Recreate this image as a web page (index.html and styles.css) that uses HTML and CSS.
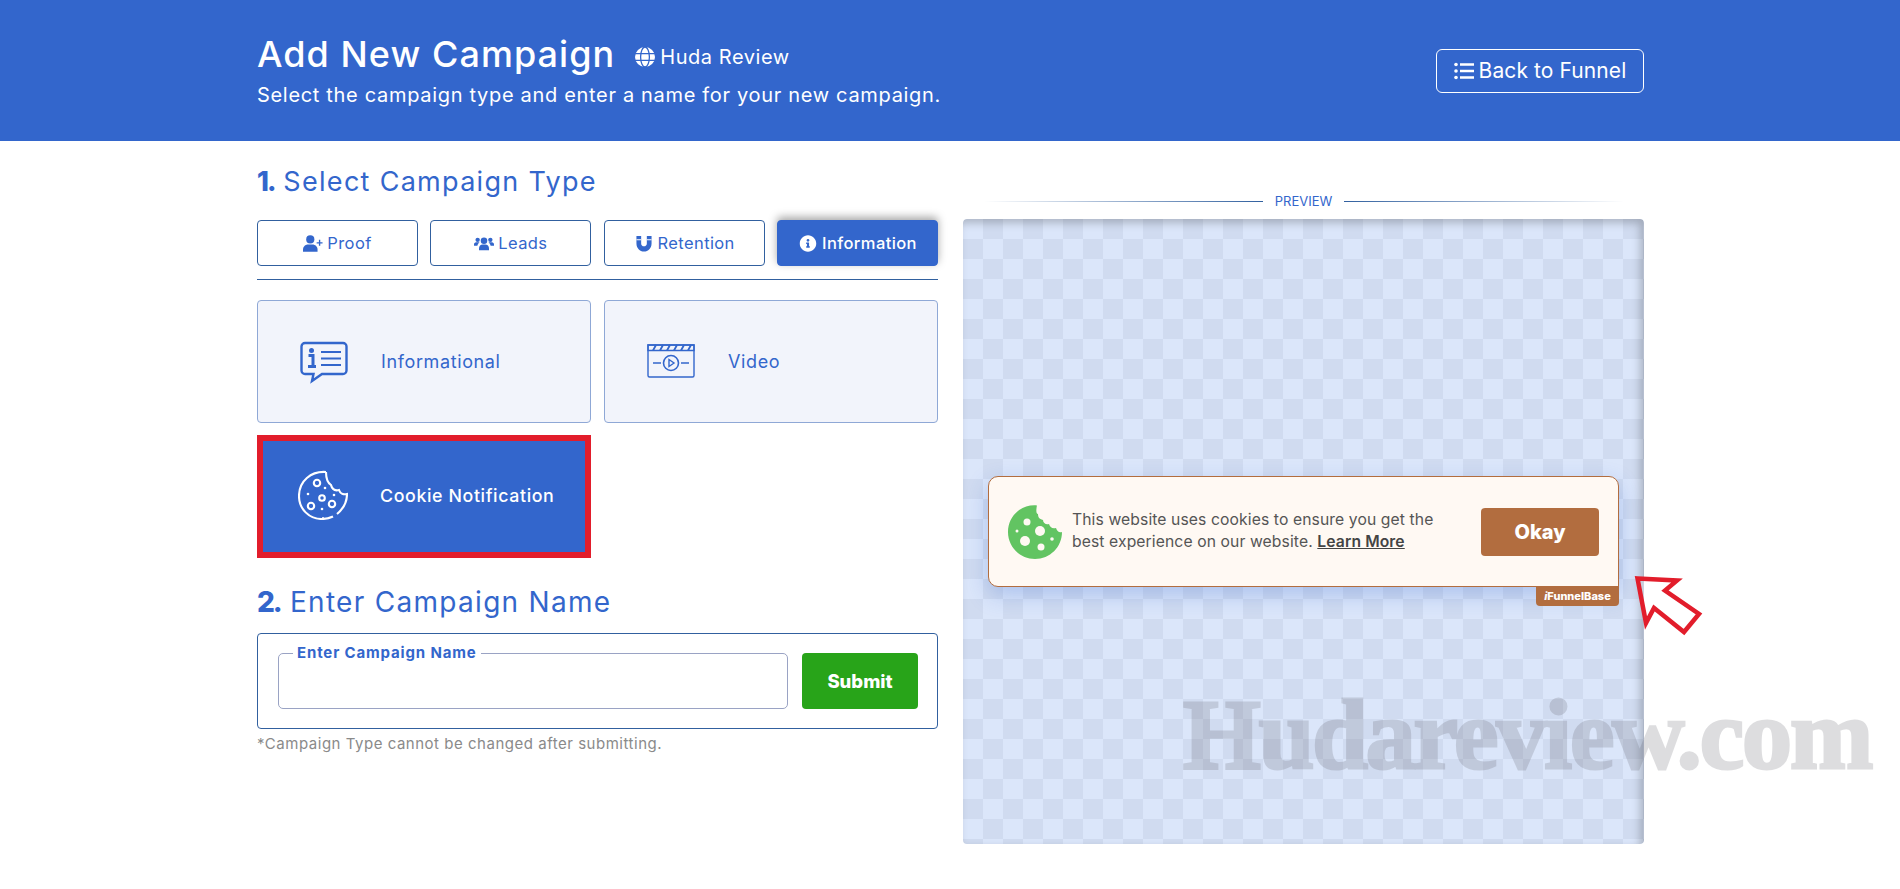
FILE: index.html
```html
<!DOCTYPE html>
<html lang="en">
<head>
    <meta charset="UTF-8">
    <meta name="viewport" content="width=device-width, initial-scale=1.0">
    <title>Add New Campaign</title>
    <link rel="stylesheet" href="styles.css">
</head>
<body>
    <header class="topbar">
        <div class="wrap topbar-inner">
            <div>
                <div class="title-row">
                    <h1>Add New Campaign</h1>
                    <span class="site">
                        <svg class="site-icon" viewBox="0 0 20 20"><circle cx="10" cy="10" r="10" fill="#fff"/><g fill="none" stroke="#3366cc" stroke-width="1.3"><ellipse cx="10" cy="10" rx="4.4" ry="10"/><path d="M0 6.6h20M0 13.4h20"/></g></svg>
                        Huda Review
                    </span>
                </div>
                <p class="subtitle">Select the campaign type and enter a name for your new campaign.</p>
            </div>
            <a class="back-btn" href="#">
                <svg class="back-icon" viewBox="0 0 20 20" fill="#fff"><circle cx="2" cy="3.5" r="1.8"/><circle cx="2" cy="10" r="1.8"/><circle cx="2" cy="16.5" r="1.8"/><path d="M6 2.3h14v2.4H6zM6 8.8h14v2.4H6zM6 15.3h14v2.4H6z"/></svg>
                Back to Funnel
            </a>
        </div>
    </header>

    <main class="wrap columns">
        <section class="left">
            <h2><b>1.</b> Select Campaign Type</h2>
            <div class="tabs">
                <button class="tab">
                    <svg class="tab-icon" viewBox="0 0 22 18" fill="currentColor"><circle cx="8" cy="4.5" r="4.5"/><path d="M0 18v-2.5C0 12.5 2.500 10 5.500 10h5c3 0 5.500 2.500 5.500 5.500V18z"/><path d="M17.500 5h1.500v2.500h2.500V9H19v2.500h-1.500V9H15V7.500h2.500z"/></svg>
                    Proof
                </button>
                <button class="tab">
                    <svg class="tab-icon" viewBox="0 0 22 18" fill="currentColor"><circle cx="11" cy="6" r="3.600"/><circle cx="4" cy="5" r="2.400"/><circle cx="18" cy="5" r="2.400"/><path d="M5.500 16.500v-2.300c0-2.400 1.800-4 4-4h3c2.200 0 4 1.600 4 4v2.300z"/><path d="M0 11.500v-1.500c0-1.300 1-2.400 2.300-2.400h2.900c.3 0 .6.100.8.200-1.200.8-2 2-2.300 3.700zM22 11.500v-1.500c0-1.300-1-2.400-2.300-2.400h-2.900c-.3 0-.6.100-.8.200 1.200.8 2 2 2.300 3.700z"/></svg>
                    Leads
                </button>
                <button class="tab">
                    <svg class="tab-icon magnet" viewBox="0 0 18 18" fill="currentColor"><path d="M1 1h5v8c0 1.900 1.300 3 3 3s3-1.100 3-3V1h5v8c0 5-3.500 8.500-8 8.500S1 14 1 9z"/><path d="M6 4.500H1v1h5zM17 4.500h-5v1h5z" fill="#fff"/></svg>
                    Retention
                </button>
                <button class="tab active">
                    <svg class="tab-icon" viewBox="0 0 512 512" fill="currentColor"><path d="M256 8C119 8 8 119 8 256s111 248 248 248 248-111 248-248S393 8 256 8zm0 110c23 0 42 19 42 42s-19 42-42 42-42-19-42-42 19-42 42-42zm56 254c0 7-5 12-12 12h-88c-7 0-12-5-12-12v-24c0-7 5-12 12-12h12v-64h-12c-7 0-12-5-12-12v-24c0-7 5-12 12-12h64c7 0 12 5 12 12v100h12c7 0 12 5 12 12v24z"/></svg>
                    Information
                </button>
            </div>
            <hr class="divider">
            <div class="cards">
                <div class="card">
                    <svg class="card-icon" viewBox="0 0 50 50" fill="none" stroke="currentColor" stroke-width="2.400"><path d="M6 6h38a3.500 3.500 0 0 1 3.500 3.500v24a3.500 3.500 0 0 1-3.500 3.500H23L13 44l1.500-7H6a3.500 3.500 0 0 1-3.500-3.500v-24A3.500 3.500 0 0 1 6 6z"/><path d="M22 15h20M22 21.500h20M22 28h20" stroke-width="2"/><circle cx="12.500" cy="13.500" r="2.500" fill="currentColor" stroke="none"/><path d="M9.500 18.500h4.500v10M9 29.500h8" stroke-width="3"/></svg>
                    <span class="card-label">Informational</span>
                </div>
                <div class="card">
                    <svg class="card-icon" viewBox="0 0 50 50" fill="none" stroke="currentColor" stroke-width="1.400"><path d="M2 8h46v30.500a1.500 1.500 0 0 1-1.500 1.500h-43A1.500 1.500 0 0 1 2 38.500z"/><path d="M2 8h46v5.500H2z"/><path d="M7 13.500l3-5.500M14 13.500l3-5.500M21 13.500l3-5.500M28 13.500l3-5.500M35 13.500l3-5.500M42 13.500l3-5.500" stroke-width="1.800"/><circle cx="25" cy="26" r="7.500" stroke-width="1.600"/><path d="M23 22.500l5 3.500-5 3.500z"/><path d="M7 26h8M35 26h8" stroke-width="1.600"/></svg>
                    <span class="card-label">Video</span>
                </div>
                <div class="card selected">
                    <svg class="card-icon cookie-line" viewBox="0 0 50 50" fill="none" stroke="currentColor" stroke-width="2.100"><path d="M28 2C13 1 1 11 1 26c0 13 10 23 23 23 4 0 8-1 11-2.500M39 44c6-5 10-12 10-20-4 1-7-1-8-4-4 1-7-1-8-5-3-2-5-7-5-13"/><circle cx="19" cy="13" r="3.200"/><circle cx="24" cy="28" r="2.800"/><circle cx="13" cy="36" r="3.200"/><circle cx="34" cy="34" r="3.200"/><g fill="currentColor" stroke="none"><circle cx="10" cy="24" r="1.300"/><circle cx="27" cy="18" r="1.300"/><circle cx="36" cy="25" r="1.300"/><circle cx="24" cy="39" r="1.300"/><circle cx="25" cy="48" r="1"/></g></svg>
                    <span class="card-label">Cookie Notification</span>
                </div>
            </div>
            <h2 class="second"><b>2.</b> Enter Campaign Name</h2>
            <div class="name-box">
                <fieldset class="name-field">
                    <legend>Enter Campaign Name</legend>
                </fieldset>
                <button class="submit">Submit</button>
            </div>
            <p class="hint">*Campaign Type cannot be changed after submitting.</p>
        </section>

        <section class="right">
            <div class="preview-label"><span>PREVIEW</span></div>
            <div class="preview">
                <div class="notice">
                    <svg class="notice-cookie" viewBox="0 0 54 54"><path fill="#62c462" d="M29 .5C13 -1 0 11 0 27c0 15 12 27 27 27s27-12 27-27c-3 1-5-1-6-4-4 1-6-1-7-4-3 1-6-1-6-4-4-1-5-3-5-6-2 0-2-4-1-9z"/><g fill="#fff9f3"><circle cx="19" cy="17" r="3.500"/><circle cx="32" cy="26" r="5"/><circle cx="17" cy="36" r="5"/><circle cx="33" cy="42" r="3.500"/><circle cx="9" cy="26" r="1.500"/><circle cx="44" cy="34" r="1.800"/></g></svg>
                    <p class="notice-text">This website uses cookies to ensure you get the best experience on our website. <a href="#">Learn More</a></p>
                    <button class="okay">Okay</button>
                    <span class="badge"><i>i</i>FunnelBase</span>
                </div>
            </div>
        </section>
    </main>

    <svg class="arrow" viewBox="0 0 76 70" width="76" height="70"><path d="M3.500 3.500L43 5.500 31 15.500 65 39 50 57 20 33 12 48z" fill="#fff" fill-opacity=".3" stroke="#e21d2b" stroke-width="4.500"/></svg>
    <div class="watermark">Hudareview.com</div>
</body>
</html>
```

FILE: styles.css
```css
* {
    margin: 0;
    padding: 0;
    box-sizing: border-box;
}

body {
    font-family: "Inter", "Open Sans", sans-serif;
    background-color: #fff;
    color: #3366cc;
    height: 889px;
    overflow: hidden;
    position: relative;
}

.wrap {
    width: 1387px;
    margin-left: 257px;
}

/* Top bar */
.topbar {
    background-color: #3366cc;
    color: #fff;
    height: 141px;
}

.topbar-inner {
    display: flex;
    justify-content: space-between;
    align-items: center;
    height: 100%;
}

.title-row {
    display: flex;
    align-items: center;
    gap: 20px;
}

h1 {
    font-size: 36px;
    font-weight: 500;
    line-height: 44px;
    letter-spacing: 1.05px;
}

.site {
    display: flex;
    align-items: center;
    gap: 5px;
    font-size: 20px;
    letter-spacing: 0.55px;
    margin-top: 6px;
}

.site-icon {
    width: 20px;
    height: 20px;
}

.subtitle {
    font-size: 20px;
    line-height: 28px;
    margin-top: 5px;
    letter-spacing: 0.68px;
}

.back-btn {
    display: flex;
    align-items: center;
    justify-content: center;
    gap: 5px;
    width: 208px;
    height: 44px;
    border: 1.500px solid #fff;
    border-radius: 6px;
    color: #fff;
    font-size: 21px;
    letter-spacing: 0.1px;
    text-decoration: none;
}

.back-icon {
    width: 20px;
    height: 20px;
}

/* Columns */
.columns {
    display: grid;
    grid-template-columns: 681px 681px;
    column-gap: 25px;
}

h2 {
    font-size: 27px;
    font-weight: 400;
    line-height: 34px;
    margin-top: 24px;
    letter-spacing: 1.3px;
}

h2 b {
    font-weight: 800;
    letter-spacing: -2px;
}

.tabs {
    display: grid;
    grid-template-columns: repeat(4, 161px);
    justify-content: space-between;
    margin-top: 21px;
}

.tab {
    display: flex;
    align-items: center;
    justify-content: center;
    gap: 4px;
    height: 46px;
    background: #fff;
    border: 1px solid #31609f;
    border-radius: 4px;
    color: #3366cc;
    font-family: inherit;
    font-size: 16.500px;
    letter-spacing: 0.4px;
}

.tab.active {
    background: #3366cc;
    border-color: #3366cc;
    color: #fff;
    font-weight: 500;
    box-shadow: 0 -3px 8px rgba(0, 0, 0, 0.35);
}

.tab-icon {
    width: 20px;
    height: 17px;
}

.divider {
    border: 0;
    border-top: 1px solid #31609f;
    margin-top: 13px;
}

.cards {
    display: grid;
    grid-template-columns: 334px 334px;
    grid-auto-rows: 123px;
    justify-content: space-between;
    row-gap: 12px;
    margin-top: 20px;
}

.card {
    display: flex;
    align-items: center;
    gap: 32px;
    padding-left: 41px;
    background: #f2f4fb;
    border: 1px solid #8fa8d6;
    border-radius: 4px;
    color: #3366cc;
}

.card-icon {
    width: 50px;
    height: 50px;
    flex: none;
}

.card-label {
    font-size: 18px;
    letter-spacing: 0.62px;
}

.card.selected {
    background: #3366cc;
    border: 6px solid #e21d2b;
    border-radius: 0;
    color: #fff;
    padding: 0 0 3px 35px;
}

.card.selected .card-label {
    font-size: 17.800px;
    font-weight: 500;
}

.second {
    font-size: 28px;
    margin-top: 27px;
}

.name-box {
    display: flex;
    gap: 14px;
    height: 96px;
    margin-top: 14px;
    padding: 19px 19px 20px 20px;
    border: 1px solid #31609f;
    border-radius: 4px;
}

.name-field {
    flex: 1;
    height: 63px;
    margin-top: -7px;
    padding-left: 14px;
    border: 1px solid #9aa3c4;
    border-radius: 5px;
}

.name-field legend {
    padding: 0 4px;
    font-size: 15px;
    font-weight: 700;
    line-height: 14px;
    letter-spacing: 0.85px;
}

.submit {
    width: 116px;
    height: 56px;
    background: #28a419;
    border: 0;
    border-radius: 4px;
    color: #fff;
    font-family: inherit;
    font-size: 18.500px;
    font-weight: 800;
}

.hint {
    font-size: 15px;
    line-height: 20px;
    margin-top: 5px;
    color: #8a8a8a;
    letter-spacing: 0.52px;
}

/* Preview */
.preview-label {
    display: flex;
    align-items: center;
    gap: 12px;
    width: 640px;
    margin: 51px auto 0;
    color: #3366cc;
    font-size: 13px;
    line-height: 18px;
}

.preview-label::before,
.preview-label::after {
    content: "";
    flex: 1;
    height: 1px;
}

.preview-label::before {
    background: linear-gradient(to right, rgba(49, 96, 159, 0), #31609f);
}

.preview-label::after {
    background: linear-gradient(to left, rgba(49, 96, 159, 0), #31609f);
}

.preview {
    display: flex;
    justify-content: center;
    height: 625px;
    margin-top: 9px;
    padding-top: 257px;
    border-radius: 4px;
    background-color: #dbe6fa;
    background-image: conic-gradient(#d0dbf0 25%, #dbe6fa 25% 50%, #d0dbf0 50% 75%, #dbe6fa 75%);
    background-size: 40px 40px;
    box-shadow: inset -4px 4px 8px rgba(0, 0, 0, 0.22);
}

.notice {
    position: relative;
    display: flex;
    align-items: center;
    width: 631px;
    height: 111px;
    padding: 0 19px 0 19px;
    background: #fff9f3;
    border: 1px solid #b26d3f;
    border-radius: 10px 10px 0 10px;
    box-shadow: 0 8px 22px rgba(51, 102, 204, 0.28);
    color: #555;
}

.notice-cookie {
    width: 54px;
    height: 54px;
    flex: none;
}

.notice-text {
    width: 375px;
    margin-left: 10px;
    padding-bottom: 2px;
    font-size: 15.700px;
    line-height: 22px;
    letter-spacing: 0.1px;
}

.notice-text a {
    color: #444;
    font-weight: 600;
}

.okay {
    width: 118px;
    height: 48px;
    margin-left: auto;
    background: #b26d3f;
    border: 0;
    border-radius: 4px;
    color: #fff;
    font-family: inherit;
    font-size: 20px;
    font-weight: 800;
}

.badge {
    position: absolute;
    top: 100%;
    right: -1px;
    width: 83px;
    height: 20px;
    background: #b26d3f;
    border-radius: 0 0 4px 4px;
    color: #fff;
    font-size: 11px;
    font-weight: 800;
    line-height: 20px;
    text-align: center;
}

/* Things pasted over the screenshot */
.arrow {
    position: absolute;
    left: 1634px;
    top: 575px;
}

.watermark {
    position: absolute;
    left: 1183px;
    top: 680px;
    font-family: "Liberation Serif", serif;
    font-size: 100px;
    font-weight: 700;
    line-height: 110px;
    letter-spacing: -2.100px;
    color: #5a5a64;
    -webkit-text-stroke: 3px #5a5a64;
    opacity: 0.2;
    white-space: nowrap;
}
```
